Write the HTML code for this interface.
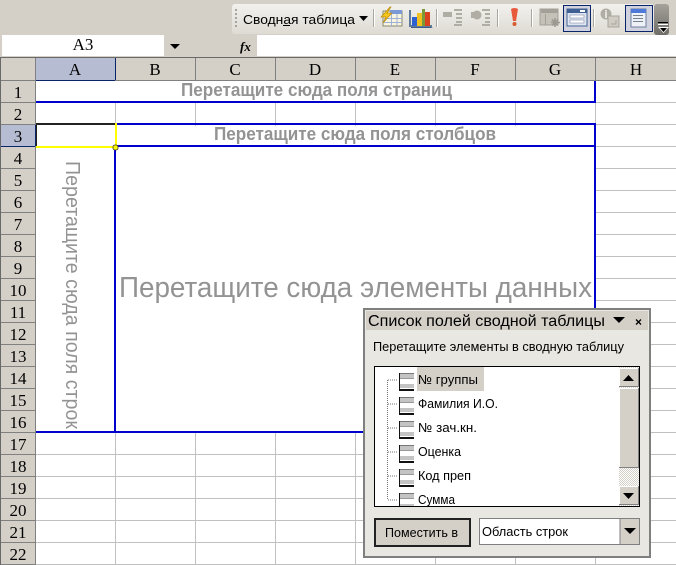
<!DOCTYPE html>
<html><head><meta charset="utf-8"><style>
html,body{margin:0;padding:0;background:#fff;width:676px;height:565px;overflow:hidden}
svg{display:block}
.h{font-family:"Liberation Serif",serif;font-size:17px;fill:#000;text-anchor:middle}
.u{font-family:"Liberation Sans",sans-serif;font-size:13px;fill:#000}
.g{font-family:"Liberation Sans",sans-serif;fill:#939393}
.b{font-weight:bold}
</style></head><body>
<svg width="676" height="565" viewBox="0 0 676 565" xmlns="http://www.w3.org/2000/svg">
<defs>
<linearGradient id="tb" x1="0" y1="0" x2="0" y2="1"><stop offset="0" stop-color="#f2f1ed"/><stop offset="1" stop-color="#dedbd4"/></linearGradient>
<linearGradient id="ov" x1="0" y1="0" x2="0" y2="1"><stop offset="0" stop-color="#a5a29b"/><stop offset="1" stop-color="#6f6d68"/></linearGradient>
<pattern id="dith" width="2" height="2" patternUnits="userSpaceOnUse"><rect width="2" height="2" fill="#fff"/><rect width="1" height="1" fill="#d4d0c8"/><rect x="1" y="1" width="1" height="1" fill="#d4d0c8"/></pattern>
<g id="fi"><rect x="0" y="0" width="15" height="18" fill="#fff"/><rect x="1" y="0" width="14" height="1" fill="#777"/><rect x="1" y="1" width="14" height="4" fill="#c4c4c4"/><rect x="1" y="5" width="14" height="1" fill="#999"/><rect x="1" y="6" width="14" height="5" fill="#fff"/><rect x="1" y="11" width="14" height="4" fill="#c4c4c4"/><rect x="0" y="0" width="1" height="18" fill="#111"/><rect x="0" y="16" width="15" height="2" fill="#111"/></g>
</defs>

<!-- chrome backgrounds -->
<rect x="0" y="0" width="676" height="57" fill="#d4d0c8"/>
<rect x="232" y="4" width="422" height="30" rx="3" fill="url(#tb)"/>
<rect x="654" y="4" width="15" height="31" rx="3" fill="url(#ov)"/>
<rect x="658" y="22" width="10" height="1" fill="#000"/>
<rect x="658" y="24" width="10" height="1" fill="#fff"/>
<path d="M658 27h11l-5.500 6z" fill="#fff"/><path d="M660 28h7l-3.500 4z" fill="#000"/>
<g fill="#a8a59d"><rect x="235" y="9" width="2" height="2"/><rect x="235" y="13" width="2" height="2"/><rect x="235" y="17" width="2" height="2"/><rect x="235" y="21" width="2" height="2"/><rect x="235" y="25" width="2" height="2"/></g>

<!-- toolbar -->
<text x="243" y="24" class="u" textLength="112" lengthAdjust="spacingAndGlyphs">Сводная таблица</text>
<rect x="283" y="25" width="7" height="1" fill="#000"/>
<path d="M359 16h9l-4.500 5z" fill="#000"/>
<g fill="#aaa79f"><rect x="373" y="9" width="1" height="18"/><rect x="436" y="9" width="1" height="18"/><rect x="497" y="9" width="1" height="18"/><rect x="531" y="9" width="1" height="18"/><rect x="593" y="9" width="1" height="18"/></g>
<g fill="#fff"><rect x="374" y="9" width="1" height="18"/><rect x="437" y="9" width="1" height="18"/><rect x="498" y="9" width="1" height="18"/><rect x="532" y="9" width="1" height="18"/><rect x="594" y="9" width="1" height="18"/></g>
<!-- pivot report icon -->
<rect x="383" y="11" width="19" height="15" fill="#f7f4e0" stroke="#8a8a70"/>
<rect x="390" y="10" width="12" height="4" fill="#7a9ad8"/>
<g stroke="#9fb0d8"><path d="M384 18.500h18M384 22.500h18M391.500 14v12M397 14v12"/></g>
<path d="M390 7l-9 10h5l-3 6 9-10h-5l4-6z" fill="#f5c518" stroke="#b98a10" stroke-width=".7"/>
<!-- chart icon -->
<path d="M410 10v16h22" fill="none" stroke="#5f7a9a" stroke-width="2"/>
<path d="M411 27h22l-2 1h-20z" fill="#3c5a88"/>
<rect x="412" y="17" width="5" height="9" fill="#2f62d0"/><rect x="417" y="13" width="5" height="13" fill="#f0c020"/><rect x="422" y="9" width="3" height="17" fill="#7a9a3a"/><rect x="425" y="12" width="5" height="14" fill="#d8421e"/>
<!-- show/hide detail, disabled -->
<g fill="#b0ada5"><rect x="443" y="12" width="9" height="5"/><rect x="454" y="9" width="8" height="2"/><rect x="456" y="13" width="6" height="2"/><rect x="456" y="17" width="6" height="2"/><rect x="456" y="21" width="6" height="2"/><rect x="454" y="24" width="8" height="2"/>
<circle cx="477" cy="15" r="4.500"/><rect x="471" y="12" width="5" height="6"/><rect x="482" y="9" width="8" height="2"/><rect x="485" y="13" width="5" height="2"/><rect x="485" y="17" width="5" height="2"/><rect x="485" y="21" width="5" height="2"/><rect x="482" y="24" width="8" height="2"/></g>
<!-- exclamation -->
<path d="M511 9q3.500-2 7 0l-2 12h-3z" fill="#e8583a"/><circle cx="514.500" cy="24" r="2" fill="#d8582f"/>
<!-- settings icon, disabled -->
<rect x="540" y="9" width="18" height="16" fill="#c4c1b8" stroke="#a3a098"/><rect x="541" y="9" width="17" height="4" fill="#a3a098"/><rect x="545" y="14" width="1" height="11" fill="#a3a098"/>
<path d="M555 18v9M551 22.500h9M552 19.500l6 6M558 19.500l-6 6" stroke="#9d9a92" stroke-width="1.600"/>
<!-- toggled: field list 1 -->
<rect x="563.500" y="5.500" width="27" height="26" fill="#d0d3df" stroke="#0a246a"/>
<rect x="567" y="9" width="20" height="17" fill="#dfe6f3" stroke="#46618f"/>
<rect x="567" y="9" width="20" height="4" fill="#3d5f94"/><rect x="580" y="10" width="5" height="2" fill="#fff"/>
<rect x="570" y="15" width="14" height="3" fill="#fff" stroke="#7d8aa5" stroke-width=".6"/><rect x="570" y="20" width="14" height="3" fill="#fff" stroke="#7d8aa5" stroke-width=".6"/>
<!-- info disabled -->
<circle cx="606" cy="14" r="5.500" fill="#b0ada5"/><rect x="605" y="12" width="2" height="6" fill="#e4e2dc"/><rect x="605" y="10" width="2" height="1.500" fill="#e4e2dc"/>
<rect x="608" y="16" width="11" height="11" fill="#cfccc4" stroke="#a8a59d"/><path d="M611 24h5v-4" fill="none" stroke="#a8a59d"/>
<!-- toggled 2 -->
<rect x="625.500" y="5.500" width="27" height="26" fill="#d0d3df" stroke="#0a246a"/>
<rect x="631" y="9" width="15" height="18" fill="#eef1f5" stroke="#6d7f9e"/>
<rect x="631" y="9" width="15" height="4" fill="#4d7ad8"/>
<path d="M633 15.500h10M633 18.500h10M633 21.500h10" stroke="#77818e"/>

<!-- formula bar -->
<rect x="2" y="35" width="162" height="21" fill="#fff"/>
<rect x="257" y="35" width="419" height="21" fill="#fff"/>
<text x="83" y="50" class="h">A3</text>
<path d="M170 44h10l-5 5z" fill="#000"/>
<text x="240" y="51" font-family="Liberation Serif,serif" font-size="13" font-style="italic" font-weight="bold" fill="#000">fx</text>

<!-- grid frame -->
<rect x="0" y="57" width="676" height="508" fill="#fff"/>
<rect x="0" y="57" width="676" height="1" fill="#696969"/>
<rect x="0" y="58" width="1" height="507" fill="#696969"/>
<rect x="1" y="58" width="675" height="22" fill="#d4d0c8"/>
<rect x="1" y="58" width="34" height="507" fill="#d4d0c8"/>
<rect x="36" y="58" width="79" height="22" fill="#b6bdd2"/>
<rect x="1" y="125" width="34" height="21" fill="#b6bdd2"/>

<!-- cell gridlines -->
<g stroke="#c0c0c0" stroke-width="1">
<path d="M35 102.500H676M35 124.500H676M35 146.500H676M35 168.500H676M35 190.500H676M35 212.500H676M35 234.500H676M35 256.500H676M35 278.500H676M35 300.500H676M35 322.500H676M35 344.500H676M35 366.500H676M35 388.500H676M35 410.500H676M35 432.500H676M35 454.500H676M35 476.500H676M35 498.500H676M35 520.500H676M35 542.500H676M35 564.500H676"/>
<path d="M115.500 80V565M195.500 80V565M275.500 80V565M355.500 80V565M435.500 80V565M515.500 80V565M595.500 80V565"/>
</g>
<!-- clear interior of pivot areas -->
<rect x="36" y="81" width="559" height="21" fill="#fff"/>
<rect x="117" y="126" width="478" height="19" fill="#fff"/>
<rect x="36" y="147" width="559" height="285" fill="#fff"/>

<!-- header separators -->
<g stroke="#808080">
<path d="M35.500 58V565"/>
<path d="M1 80.500H676"/>
<path d="M115.500 58V80M195.500 58V80M275.500 58V80M355.500 58V80M435.500 58V80M515.500 58V80M595.500 58V80"/>
<path d="M1 102.500H35M1 124.500H35M1 146.500H35M1 168.500H35M1 190.500H35M1 212.500H35M1 234.500H35M1 256.500H35M1 278.500H35M1 300.500H35M1 322.500H35M1 344.500H35M1 366.500H35M1 388.500H35M1 410.500H35M1 432.500H35M1 454.500H35M1 476.500H35M1 498.500H35M1 520.500H35M1 542.500H35M1 564.500H35"/>
</g>
<path d="M36 80.500H115M115.500 58V80M1 146.500H35M35.500 125V146" stroke="#0a246a"/>

<g>
<text x="75" y="75" class="h">A</text><text x="155" y="75" class="h">B</text><text x="235" y="75" class="h">C</text><text x="315" y="75" class="h">D</text><text x="395" y="75" class="h">E</text><text x="475" y="75" class="h">F</text><text x="555" y="75" class="h">G</text><text x="636" y="75" class="h">H</text>
<text x="18" y="98" class="h">1</text><text x="18" y="120" class="h">2</text><text x="18" y="142" class="h">3</text><text x="18" y="164" class="h">4</text><text x="18" y="186" class="h">5</text><text x="18" y="208" class="h">6</text><text x="18" y="230" class="h">7</text><text x="18" y="252" class="h">8</text><text x="18" y="274" class="h">9</text><text x="18" y="296" class="h">10</text><text x="18" y="318" class="h">11</text><text x="18" y="340" class="h">12</text><text x="18" y="362" class="h">13</text><text x="18" y="384" class="h">14</text><text x="18" y="406" class="h">15</text><text x="18" y="428" class="h">16</text><text x="18" y="450" class="h">17</text><text x="18" y="472" class="h">18</text><text x="18" y="494" class="h">19</text><text x="18" y="516" class="h">20</text><text x="18" y="538" class="h">21</text><text x="18" y="560" class="h">22</text>
</g>

<!-- pivot outlines -->
<g fill="#0000cc">
<rect x="36" y="101" width="560" height="2"/>
<rect x="594" y="81" width="2" height="22"/>
<rect x="116" y="123" width="480" height="2"/>
<rect x="116" y="145" width="480" height="2"/>
<rect x="594" y="123" width="2" height="309"/>
<rect x="114" y="147" width="2" height="286"/>
<rect x="36" y="431" width="560" height="2"/>
</g>
<!-- active cell -->
<rect x="36" y="123" width="79" height="2" fill="#222"/>
<rect x="36" y="125" width="1" height="22" fill="#222"/>
<rect x="36" y="146" width="79" height="2" fill="#ffff00"/>
<rect x="115" y="123" width="2" height="24" fill="#ffff00"/>
<rect x="113" y="145" width="5" height="5" rx="2" fill="#ffff00" stroke="#333" stroke-width=".8"/>

<!-- pivot labels -->
<text x="181" y="96" class="g b" font-size="18" textLength="271" lengthAdjust="spacingAndGlyphs">Перетащите сюда поля страниц</text>
<text x="214" y="140" class="g b" font-size="18" textLength="282" lengthAdjust="spacingAndGlyphs">Перетащите сюда поля столбцов</text>
<text x="119" y="297" class="g" font-size="29" textLength="473" lengthAdjust="spacingAndGlyphs">Перетащите сюда элементы данных</text>
<text transform="translate(66 161) rotate(90)" class="g" font-size="20" textLength="268" lengthAdjust="spacingAndGlyphs">Перетащите сюда поля строк</text>

<!-- field list panel -->
<rect x="363" y="308" width="288" height="250" fill="#e9e7e2"/>
<rect x="364" y="309" width="286" height="248" fill="none" stroke="#7f7f7f" stroke-width="2"/>
<rect x="366" y="311" width="282" height="19" fill="#d4d0c8"/>
<text x="368" y="326" font-family="Liberation Sans,sans-serif" font-size="15.500" fill="#000" textLength="237" lengthAdjust="spacingAndGlyphs">Список полей сводной таблицы</text>
<path d="M613 317h12l-6 6z" fill="#000"/>
<path d="M636 319.500l5 5M641 319.500l-5 5" stroke="#000" stroke-width="1.300"/>
<text x="373" y="351" class="u" textLength="251" lengthAdjust="spacingAndGlyphs">Перетащите элементы в сводную таблицу</text>

<rect x="374.500" y="366.500" width="265" height="140" fill="#fff" stroke="#000"/>
<rect x="417" y="367" width="67" height="24" fill="#d4d0c8"/>
<path d="M387.500 380V500" stroke="#777" stroke-dasharray="1 1"/>
<path d="M388 380h10M388 404h10M388 428h10M388 452h10M388 476h10M388 500h10" stroke="#777" stroke-dasharray="1 1"/>
<use href="#fi" x="399" y="373"/><use href="#fi" x="399" y="397"/><use href="#fi" x="399" y="421"/><use href="#fi" x="399" y="445"/><use href="#fi" x="399" y="469"/>
<svg x="399" y="493" width="15" height="13"><use href="#fi"/></svg>
<text x="418" y="384" class="u" textLength="60" lengthAdjust="spacingAndGlyphs">№ группы</text>
<text x="418" y="408" class="u" textLength="80" lengthAdjust="spacingAndGlyphs">Фамилия И.О.</text>
<text x="418" y="432" class="u" textLength="59" lengthAdjust="spacingAndGlyphs">№ зач.кн.</text>
<text x="418" y="456" class="u" textLength="43" lengthAdjust="spacingAndGlyphs">Оценка</text>
<text x="418" y="480" class="u" textLength="53" lengthAdjust="spacingAndGlyphs">Код преп</text>
<svg x="375" y="490" width="240" height="16"><text x="43" y="14" class="u" textLength="37" lengthAdjust="spacingAndGlyphs">Сумма</text></svg>

<!-- scrollbar -->
<rect x="619" y="367" width="20" height="139" fill="url(#dith)"/>
<g>
<rect x="619" y="368" width="20" height="19" fill="#d4d0c8"/><path d="M619.500 387V368.500H639" fill="none" stroke="#fff"/><path d="M638.500 368V387M619 386.500H639" stroke="#808080"/><path d="M623 381h11l-5.500-6z" fill="#000"/>
<rect x="619" y="388" width="20" height="80" fill="#d4d0c8"/><path d="M619.500 468V388.500H639" fill="none" stroke="#fff"/><path d="M638.500 388V468M619 467.500H639" stroke="#808080"/>
<rect x="619" y="486" width="20" height="19" fill="#d4d0c8"/><path d="M619.500 505V486.500H639" fill="none" stroke="#fff"/><path d="M638.500 486V505M619 504.500H639" stroke="#808080"/><path d="M623 493h11l-5.500 6z" fill="#000"/>
</g>

<!-- footer controls -->
<rect x="375" y="519" width="95" height="27" fill="#d4d0c8" stroke="#222" stroke-width="2"/>
<text x="385" y="537" class="u" textLength="73" lengthAdjust="spacingAndGlyphs">Поместить в</text>
<rect x="479.500" y="518.500" width="160" height="26" fill="#fff" stroke="#808080"/>
<rect x="620" y="519" width="19" height="25" fill="#d4d0c8"/><path d="M620 519v25" stroke="#808080"/>
<path d="M624 528h12l-6 6z" fill="#000"/>
<text x="482" y="536" class="u" textLength="86" lengthAdjust="spacingAndGlyphs">Область строк</text>
</svg>
</body></html>
